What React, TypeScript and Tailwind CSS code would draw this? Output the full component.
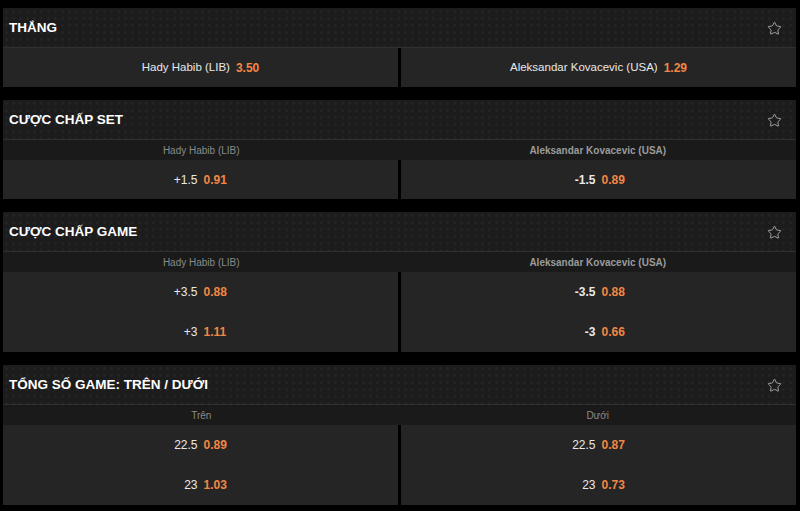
import { Star } from "lucide-react";

const font = { fontFamily: '"Liberation Sans", Arial, sans-serif' };

type Line = { label: string; odds: string };

const Header = ({ title }: { title: string }) => (
  <div className="flex items-center justify-between h-[40px] pl-[6px] pr-[14px] border-b border-[#303030] bg-[#1c1c1c] bg-[radial-gradient(circle,#242424_1.2px,transparent_1.6px)] bg-[length:7px_7px]">
    <h2 className="pt-[2px] text-[13.5px] font-bold text-white">{title}</h2>
    <Star size={15} strokeWidth={1.3} className="mt-[1px] text-[#bdbdbd]" />
  </div>
);

const SubHeader = ({ left, right, boldRight }: { left: string; right: string; boldRight?: boolean }) => (
  <div className="grid grid-cols-2 h-[20px] bg-[#1a1a1a] text-[10px]">
    <p className="flex items-center justify-center text-[#8a8a8a]">{left}</p>
    <p className={`flex items-center justify-center ${boldRight ? "font-bold text-[#9a9a9a]" : "text-[#8a8a8a]"}`}>
      {right}
    </p>
  </div>
);

const LineCell = ({ lines, bold }: { lines: Line[]; bold?: boolean }) => (
  <div className="bg-[#252525]">
    {lines.map((l) => (
      <div key={l.label} className={`grid grid-cols-2 gap-[6px] items-center ${lines.length > 1 ? "h-[40px]" : "h-[39px]"}`}>
        <span className={`text-right text-[12px] text-[#e8e8e8] ${bold ? "font-bold" : ""}`}>{l.label}</span>
        <span className="text-left text-[12px] font-bold text-[#f28744]">{l.odds}</span>
      </div>
    ))}
  </div>
);

export default function App() {
  return (
    <div className="min-h-[511px] bg-black pl-[3px] pr-[4px] pt-[8px] flex flex-col gap-[13px]" style={font}>
      <section>
        <Header title="THẮNG" />
        <div className="grid grid-cols-2 gap-[3px]">
          <div className="h-[39px] bg-[#252525] flex items-center justify-center gap-[6px]">
            <span className="text-[11.5px] text-[#e8e8e8]">Hady Habib (LIB)</span>
            <span className="text-[12px] font-bold text-[#f28744]">3.50</span>
          </div>
          <div className="h-[39px] bg-[#252525] flex items-center justify-center gap-[6px]">
            <span className="text-[11.5px] text-[#e8e8e8]">Aleksandar Kovacevic (USA)</span>
            <span className="text-[12px] font-bold text-[#f28744]">1.29</span>
          </div>
        </div>
      </section>

      <section>
        <Header title="CƯỢC CHẤP SET" />
        <SubHeader left="Hady Habib (LIB)" right="Aleksandar Kovacevic (USA)" boldRight />
        <div className="grid grid-cols-2 gap-[3px]">
          <LineCell lines={[{ label: "+1.5", odds: "0.91" }]} />
          <LineCell bold lines={[{ label: "-1.5", odds: "0.89" }]} />
        </div>
      </section>

      <section>
        <Header title="CƯỢC CHẤP GAME" />
        <SubHeader left="Hady Habib (LIB)" right="Aleksandar Kovacevic (USA)" boldRight />
        <div className="grid grid-cols-2 gap-[3px]">
          <LineCell
            lines={[
              { label: "+3.5", odds: "0.88" },
              { label: "+3", odds: "1.11" },
            ]}
          />
          <LineCell
            bold
            lines={[
              { label: "-3.5", odds: "0.88" },
              { label: "-3", odds: "0.66" },
            ]}
          />
        </div>
      </section>

      <section>
        <Header title="TỔNG SỐ GAME: TRÊN / DƯỚI" />
        <SubHeader left="Trên" right="Dưới" />
        <div className="grid grid-cols-2 gap-[3px]">
          <LineCell
            lines={[
              { label: "22.5", odds: "0.89" },
              { label: "23", odds: "1.03" },
            ]}
          />
          <LineCell
            lines={[
              { label: "22.5", odds: "0.87" },
              { label: "23", odds: "0.73" },
            ]}
          />
        </div>
      </section>
    </div>
  );
}
